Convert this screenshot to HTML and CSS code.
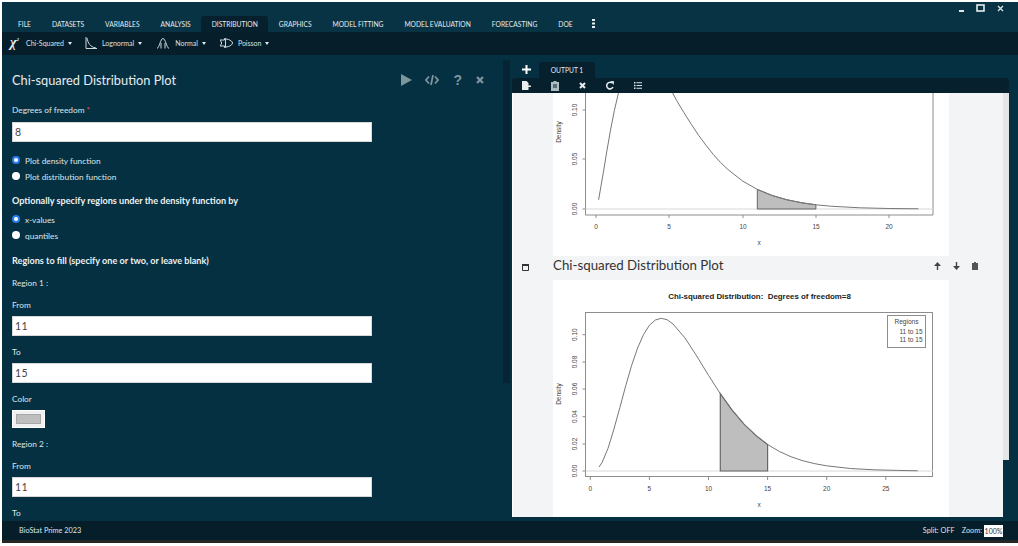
FILE: index.html
```html
<!DOCTYPE html>
<html lang="en">
<head>
    <meta charset="UTF-8">
    <title>BioStat Prime 2023</title>
    <link rel="stylesheet" href="styles.css">
</head>
<body>
    <div class="app">
        <!-- Menu bar -->
        <div class="menubar">
            <div class="tab">FILE</div>
            <div class="tab">DATASETS</div>
            <div class="tab">VARIABLES</div>
            <div class="tab">ANALYSIS</div>
            <div class="tab active">DISTRIBUTION</div>
            <div class="tab">GRAPHICS</div>
            <div class="tab">MODEL FITTING</div>
            <div class="tab">MODEL EVALUATION</div>
            <div class="tab">FORECASTING</div>
            <div class="tab">DOE</div>
            <div class="tab more">
                <svg width="3" height="9" viewBox="0 0 3 9"><path d="M0 0h3v2H0zM0 3.5h3v2H0zM0 7h3v2H0z" fill="#e8eef0"/></svg>
            </div>
            <div class="window-btns">
                <svg width="5" height="2" viewBox="0 0 5 2"><path d="M0 0h5v2H0z" fill="#dfe6e9"/></svg>
                <svg width="9" height="8" viewBox="0 0 9 8"><rect x="1" y="1" width="7" height="6" fill="none" stroke="#e6ecee" stroke-width="1.6"/></svg>
                <svg width="7" height="7" viewBox="0 0 7 7"><path d="M1 1l5 5M6 1L1 6" stroke="#dfe6e9" stroke-width="1.3"/></svg>
            </div>
        </div>

        <!-- Distribution toolbar -->
        <div class="toolbar">
            <div class="tool">
                <span class="chi">&chi;<sup>2</sup></span>
                <span>Chi-Squared</span><span class="caret"></span>
            </div>
            <div class="tool">
                <svg width="12" height="12" viewBox="0 0 12 12"><path d="M1 0v11.500H12M2 1c1 5 3 9 9 10" fill="none" stroke="#cfd8dc" stroke-width="1"/></svg>
                <span>Lognormal</span><span class="caret"></span>
            </div>
            <div class="tool normal">
                <svg width="12" height="12" viewBox="0 0 12 12"><path d="M0 11.500c2.500-1 3.500-10 6-10s3.500 9 6 10M4 11.500V6M8 11.500V6" fill="none" stroke="#cfd8dc" stroke-width="1"/></svg>
                <span>Normal</span><span class="caret"></span>
            </div>
            <div class="tool poisson">
                <svg width="13" height="10" viewBox="0 0 13 10"><path d="M0 2h4.500V.5l4 1c2 .8 4 2 4 3.500s-2 2.700-4 3.500l-4 1V8H0l1.800-3z" fill="none" stroke="#cfd8dc" stroke-width="1"/><path d="M5.500 1v8" stroke="#cfd8dc"/></svg>
                <span>Poisson</span><span class="caret"></span>
            </div>
        </div>

        <div class="main">
            <!-- Left form panel -->
            <div class="form-panel">
                <div class="form-head">
                    <h1>Chi-squared Distribution Plot</h1>
                    <div class="form-actions">
                        <svg class="play" width="12" height="12" viewBox="0 0 12 12"><path d="M1 0l11 6-11 6z" fill="#7d959f"/></svg>
                        <svg width="14" height="10" viewBox="0 0 14 10"><path d="M4 1.500L1 5l3 3.500M10 1.500L13 5l-3 3.500M8 0L6 10" fill="none" stroke="#7d959f" stroke-width="1.800"/></svg>
                        <span class="q">?</span>
                        <svg width="8" height="8" viewBox="0 0 8 8"><path d="M1 1l6 6M7 1L1 7" stroke="#7d959f" stroke-width="2.300"/></svg>
                    </div>
                </div>

                <label class="lbl first">Degrees of freedom <span class="req">*</span></label>
                <div class="field">8</div>

                <div class="radios top">
                    <div class="radio"><span class="dot on"></span>Plot density function</div>
                    <div class="radio"><span class="dot"></span>Plot distribution function</div>
                </div>

                <h2>Optionally specify regions under the density function by</h2>
                <div class="radios">
                    <div class="radio"><span class="dot on"></span>x-values</div>
                    <div class="radio"><span class="dot"></span>quantiles</div>
                </div>

                <h2 class="fill">Regions to fill (specify one or two, or leave blank)</h2>
                <label class="lbl region">Region 1 :</label>
                <label class="lbl">From</label>
                <div class="field">11</div>
                <label class="lbl">To</label>
                <div class="field">15</div>
                <label class="lbl">Color</label>
                <div class="swatch"><div></div></div>
                <label class="lbl region">Region 2 :</label>
                <label class="lbl">From</label>
                <div class="field">11</div>
                <label class="lbl">To</label>
            </div>

            <div class="splitter"></div>

            <!-- Output panel -->
            <div class="output-panel">
                <div class="output-tabs">
                    <svg width="9" height="9" viewBox="0 0 9 9"><path d="M3.500 0h2v3.500H9v2H5.500V9h-2V5.500H0v-2h3.500z" fill="#fff"/></svg>
                    <div class="output-tab">OUTPUT 1</div>
                </div>
                <div class="output-tools">
                    <svg width="9" height="9" viewBox="0 0 9 9"><path d="M0 0h4.500l2 2v2.500H9V6H6.500v3H0z" fill="#e8eef0"/></svg>
                    <svg width="8" height="10" viewBox="0 0 8 10"><path d="M2.500 0h3v1H8v9H0V1h2.500z" fill="#aebcc2"/><path d="M2 4h4M2 6h4" stroke="#061f2b"/></svg>
                    <svg width="7" height="7" viewBox="0 0 7 7"><path d="M1 1l5 5M6 1L1 6" stroke="#e8eef0" stroke-width="2"/></svg>
                    <svg width="8" height="9" viewBox="0 0 8 9"><path d="M7 6A3.300 3.300 0 1 1 6 2" fill="none" stroke="#e8eef0" stroke-width="1.500"/><path d="M4.500 0L8 .3 7.700 4z" fill="#e8eef0"/></svg>
                    <svg width="8" height="7" viewBox="0 0 8 7"><path d="M0 0h1.500v1.500H0zM2.500 .3H8v1H2.500zM0 2.700h1.500v1.500H0zM2.500 3H8v1H2.500zM0 5.500h1.500V7H0zM2.500 5.700H8v1H2.500z" fill="#dfe6e9"/></svg>
                </div>
                <div class="output-body">
                    <div class="output-scroll">
                        <div class="blocks">
                            <!-- first plot, scrolled past its top -->
                            <div class="plot plot-a">
                                <svg width="396" height="163" viewBox="0 0 396 163">
                                    <path d="M32.500 0V122H380V0" fill="none" stroke="#8d8d8d"/>
                                    <path d="M32.500 116H380" stroke="#d8d8d8"/>
                                    <path d="M43 122v3M116 122v3M190 122v3M263 122v3M336 122v3M32.500 116h-3M32.500 66h-3M32.500 17h-3" stroke="#8d8d8d"/>
                                    <path d="M204.300 96.400 218.900 102.400 233.600 106.700 248.200 109.700 262.900 111.800V116H204.300Z" fill="#bebebe" stroke="#666"/>
                                    <polyline class="curve" points="45.600,106.800 50.300,79.800 54,57.200 57.700,36.100 61.300,17.800 65,1.800 65.400,0"/>
                                    <polyline class="curve" points="119.700,0 123.600,7.500 131,19.700 138.300,31.300 145.600,42.300 153,52.300 160.300,61.500 167.600,69.500 174.900,76.500 189.600,88 204.300,96.400 218.900,102.400 233.600,106.700 248.200,109.700 262.900,111.800 277.600,113.200 306.900,114.800 336.200,115.500 365.500,115.800"/>
                                    <g class="axis">
                                        <text x="43" y="136" text-anchor="middle">0</text>
                                        <text x="116" y="136" text-anchor="middle">5</text>
                                        <text x="190" y="136" text-anchor="middle">10</text>
                                        <text x="263" y="136" text-anchor="middle">15</text>
                                        <text x="336" y="136" text-anchor="middle">20</text>
                                        <text x="206" y="152" text-anchor="middle">x</text>
                                        <text transform="translate(24 116) rotate(-90)" text-anchor="middle">0.00</text>
                                        <text transform="translate(24 66) rotate(-90)" text-anchor="middle">0.05</text>
                                        <text transform="translate(24 17) rotate(-90)" text-anchor="middle">0.10</text>
                                        <text transform="translate(8 39) rotate(-90)" text-anchor="middle">Density</text>
                                    </g>
                                </svg>
                            </div>

                            <div class="plot-head">
                                <div class="collapse">
                                    <svg width="7" height="7" viewBox="0 0 7 7"><path d="M.5.5h6v6h-6z" fill="none" stroke="#333"/><path d="M0 0h7v2H0z" fill="#333"/></svg>
                                </div>
                                <h3>Chi-squared Distribution Plot</h3>
                                <div class="plot-actions">
                                    <svg width="7" height="8" viewBox="0 0 7 8"><path d="M3.500 0L7 4H4.200v4H2.800V4H0z" fill="#444"/></svg>
                                    <svg width="7" height="8" viewBox="0 0 7 8"><path d="M3.500 8L7 4H4.200V0H2.800v4H0z" fill="#444"/></svg>
                                    <svg width="6" height="8" viewBox="0 0 6 8"><path d="M2 0h2v1h2v7H0V1h2z" fill="#555"/></svg>
                                </div>
                            </div>

                            <!-- second plot -->
                            <div class="plot plot-b">
                                <svg width="396" height="237" viewBox="0 0 396 237">
                                    <text class="title" x="206.500" y="19" text-anchor="middle">Chi-squared Distribution:  Degrees of freedom=8</text>
                                    <rect x="32.500" y="32.500" width="347" height="164" fill="none" stroke="#8d8d8d"/>
                                    <path d="M32.500 191H380" stroke="#d8d8d8"/>
                                    <path d="M37.300 197v3M96.400 197v3M155.500 197v3M214.600 197v3M273.700 197v3M332.800 197v3M32.500 191h-3M32.500 164h-3M32.500 136.700h-3M32.500 109h-3M32.500 82h-3M32.500 54.700h-3" stroke="#8d8d8d"/>
                                    <path d="M167.300 113.700 179.100 130.200 191 144.100 202.800 155.400 214.600 164.500V191H167.300Z" fill="#bebebe" stroke="#666" stroke-width="1.200"/>
                                    <polyline class="curve" points="46,187 49.100,182.400 55,168.400 60.900,149.200 66.900,127.400 72.800,105.500 78.700,85.200 84.600,68 90.500,54.600 96.400,45.300 102.300,40 108.200,38.300 114.100,39.700 120,44 131.900,57.800 143.700,76 155.500,95.300 167.300,113.700 179.100,130.200 191,144.100 202.800,155.400 214.600,164.500 226.400,171.500 238.200,176.800 250,180.800 261.900,183.700 273.700,185.800 297.300,188.500 321,189.800 344.600,190.400 364.700,190.800"/>
                                    <g class="axis">
                                        <text x="37.300" y="211" text-anchor="middle">0</text>
                                        <text x="96.400" y="211" text-anchor="middle">5</text>
                                        <text x="155.500" y="211" text-anchor="middle">10</text>
                                        <text x="214.600" y="211" text-anchor="middle">15</text>
                                        <text x="273.700" y="211" text-anchor="middle">20</text>
                                        <text x="332.800" y="211" text-anchor="middle">25</text>
                                        <text x="206" y="227" text-anchor="middle">x</text>
                                        <text transform="translate(24 191) rotate(-90)" text-anchor="middle">0.00</text>
                                        <text transform="translate(24 164) rotate(-90)" text-anchor="middle">0.02</text>
                                        <text transform="translate(24 136.700) rotate(-90)" text-anchor="middle">0.04</text>
                                        <text transform="translate(24 109) rotate(-90)" text-anchor="middle">0.06</text>
                                        <text transform="translate(24 82) rotate(-90)" text-anchor="middle">0.08</text>
                                        <text transform="translate(24 54.700) rotate(-90)" text-anchor="middle">0.10</text>
                                        <text transform="translate(8 114) rotate(-90)" text-anchor="middle">Density</text>
                                    </g>
                                    <rect x="334.500" y="35.500" width="38" height="32" fill="#fff" stroke="#8d8d8d"/>
                                    <g class="axis">
                                        <text x="353.500" y="44" text-anchor="middle">Regions</text>
                                        <text x="369.500" y="54" text-anchor="end">11 to 15</text>
                                        <text x="369.500" y="62" text-anchor="end">11 to 15</text>
                                    </g>
                                </svg>
                            </div>
                        </div>
                    </div>
                    <div class="scrollbar"><div class="thumb"></div></div>
                </div>
            </div>
        </div>

        <!-- Status bar -->
        <div class="statusbar">
            <span class="brand">BioStat Prime 2023</span>
            <div class="status-right">
                <span>Split: OFF</span>
                <span class="zoom-lbl">Zoom:</span>
                <span class="zoom-box">100%</span>
            </div>
        </div>
    </div>
</body>
</html>
```

FILE: styles.css
```css
/* General Styles */
* {
    margin: 0;
    padding: 0;
    box-sizing: border-box;
}

body {
    font-family: "Lato", "Noto Sans", sans-serif;
    width: 1018px;
    height: 546px;
    background: #fff;
    overflow: hidden;
    padding: 2px 0 3px 2px;
}

.app {
    width: 1016px;
    height: 541px;
    display: flex;
    flex-direction: column;
    background: #053042;
    border-bottom: 3px solid #262626;
}

/* Menu bar */
.menubar {
    height: 30px;
    display: flex;
    align-items: flex-end;
    padding-left: 5.5px;
    background: #083344;
    position: relative;
}

.tab {
    height: 16px;
    padding: 0 10.5px;
    font-size: 6.7px;
    line-height: 16px;
    color: #e3eaed;
    white-space: nowrap;
}

.tab.active {
    background: #06202d;
    border-radius: 3px 3px 0 0;
}

.tab.more {
    padding: 3px 5px 0 9px;
    line-height: 0;
}

.window-btns {
    position: absolute;
    top: 2px;
    right: 14px;
    display: flex;
    align-items: flex-end;
    gap: 12px;
}

/* Toolbar */
.toolbar {
    height: 23px;
    display: flex;
    align-items: center;
    padding: 0 0 1px 8px;
    gap: 13px;
    background: #051e2a;
    font-size: 7px;
    color: #d9e2e5;
}

.tool {
    display: flex;
    align-items: center;
    gap: 5px;
}

.normal {
    margin-left: 2px;
}

.normal svg {
    margin-right: 1px;
}

.poisson {
    margin-left: 1px;
}

.chi {
    width: 11px;
    font-family: "Liberation Serif", serif;
    font-size: 14px;
    font-style: italic;
    font-weight: 700;
    color: #e8eef0;
    line-height: 1;
    white-space: nowrap;
}

.chi sup {
    font-size: 5px;
}

.caret {
    width: 0;
    height: 0;
    margin-left: -1px;
    border-left: 2.5px solid transparent;
    border-right: 2.5px solid transparent;
    border-top: 3px solid #e3eaed;
}

/* Panels */
.main {
    flex: 1;
    display: flex;
    min-height: 0;
}

.form-panel {
    width: 501px;
    padding: 0 10px;
    color: #dde5e8;
    overflow: hidden;
}

.form-head {
    height: 50px;
    display: flex;
    align-items: center;
    justify-content: space-between;
    padding-right: 9px;
}

.form-head h1 {
    font-size: 12.8px;
    font-weight: 400;
    color: #e6ecee;
}

.form-actions {
    display: flex;
    align-items: center;
    gap: 14px;
}

.play {
    margin-right: -1px;
}

.q {
    font-family: "Liberation Sans", sans-serif;
    font-size: 14px;
    font-weight: 700;
    color: #7d959f;
    line-height: 1;
}

.lbl {
    display: block;
    font-size: 8.3px;
    line-height: 11px;
    margin: 11px 0 5px;
}

.lbl.first {
    margin: 0 0 6px;
}

.lbl.region {
    margin: 11px 0 10px;
}

.req {
    color: #e05050;
}

.field {
    width: 360px;
    height: 20px;
    background: #fff;
    border: 1px solid #d7d7d7;
    padding-left: 2px;
    font-size: 10.5px;
    line-height: 18px;
    color: #444;
    letter-spacing: 0.5px;
}

.radios {
    display: flex;
    flex-direction: column;
    gap: 5px;
}

.radios.top {
    margin-top: 14px;
}

.radio {
    display: flex;
    align-items: center;
    gap: 5px;
    font-size: 8.3px;
    line-height: 11px;
}

.dot {
    width: 8px;
    height: 8px;
    margin-bottom: 3px;
    border-radius: 50%;
    background: #fff;
}

.dot.on {
    border: 2.5px solid #2a7ff0;
}

.form-panel h2 {
    font-size: 9.1px;
    font-weight: 700;
    line-height: 12px;
    color: #eef2f3;
    margin: 12px 0 8px;
}

.form-panel h2.fill {
    margin: 13px 0 11px;
}

.swatch {
    width: 33px;
    height: 18px;
    background: #f0f0f0;
    border: 1px solid #fff;
    padding: 3px;
}

.swatch div {
    height: 100%;
    background: #bebebe;
    border: 1px solid #a8a8a8;
}

/* Splitter */
.splitter {
    width: 7px;
    margin-top: 5px;
    height: 323px;
    background: #062431;
}

/* Output */
.output-panel {
    flex: 1;
    display: flex;
    flex-direction: column;
    padding: 0 9px 4px 2px;
    min-width: 0;
}

.output-tabs {
    height: 23px;
    padding-left: 10px;
    display: flex;
    align-items: flex-end;
    gap: 8px;
}

.output-tabs svg {
    margin-bottom: 4px;
}

.output-tab {
    width: 56px;
    height: 16px;
    background: #06202d;
    border-radius: 3px 3px 0 0;
    color: #e3eaed;
    font-size: 6.7px;
    line-height: 16px;
    text-align: center;
}

.output-tools {
    height: 15px;
    display: flex;
    align-items: center;
    padding-left: 10px;
    gap: 20px;
    background: #06202d;
    border-radius: 3px 3px 0 0;
}

.output-body {
    flex: 1;
    display: flex;
    min-height: 0;
    background: #fff;
}

.output-scroll {
    flex: 1;
    min-width: 0;
    background: #f3f4f6;
    border-left: 1px solid #fff;
    overflow: hidden;
}

.blocks {
    width: 396px;
    margin-left: 40px;
}

.plot {
    background: #fff;
    line-height: 0;
}

.curve {
    fill: none;
    stroke: #777;
}

.plot-head {
    position: relative;
    height: 24px;
    width: 396px;
    display: flex;
    align-items: center;
    padding-bottom: 6px;
    background: #f3f4f6;
}

.plot-head h3 {
    font-size: 13.3px;
    font-weight: 400;
    color: #333;
}

.collapse {
    position: absolute;
    left: -31px;
    top: 8px;
    line-height: 0;
}

.plot-actions {
    position: absolute;
    left: 381px;
    top: 6px;
    display: flex;
    gap: 12px;
    line-height: 0;
}

.axis text {
    font-family: "Liberation Sans", sans-serif;
    font-size: 6.5px;
    fill: #444;
}

.title {
    font-family: "Liberation Sans", sans-serif;
    font-size: 7.9px;
    font-weight: 700;
    fill: #222;
    white-space: pre;
}

.scrollbar {
    width: 6px;
    background: #e4e5e6;
    display: flex;
    flex-direction: column;
    justify-content: flex-end;
}

.thumb {
    height: 57px;
    background: #053042;
}

/* Status bar */
.statusbar {
    height: 19px;
    display: flex;
    align-items: center;
    justify-content: space-between;
    padding: 0 15px 0 17px;
    background: #051e2a;
    color: #dde5e8;
    font-size: 7.3px;
}

.status-right {
    display: flex;
    align-items: center;
}

.zoom-lbl {
    margin: 0 2px 0 7px;
}

.zoom-box {
    width: 19px;
    height: 12px;
    background: #fff;
    color: #333;
    font-size: 7px;
    line-height: 12px;
    text-align: center;
}
```
